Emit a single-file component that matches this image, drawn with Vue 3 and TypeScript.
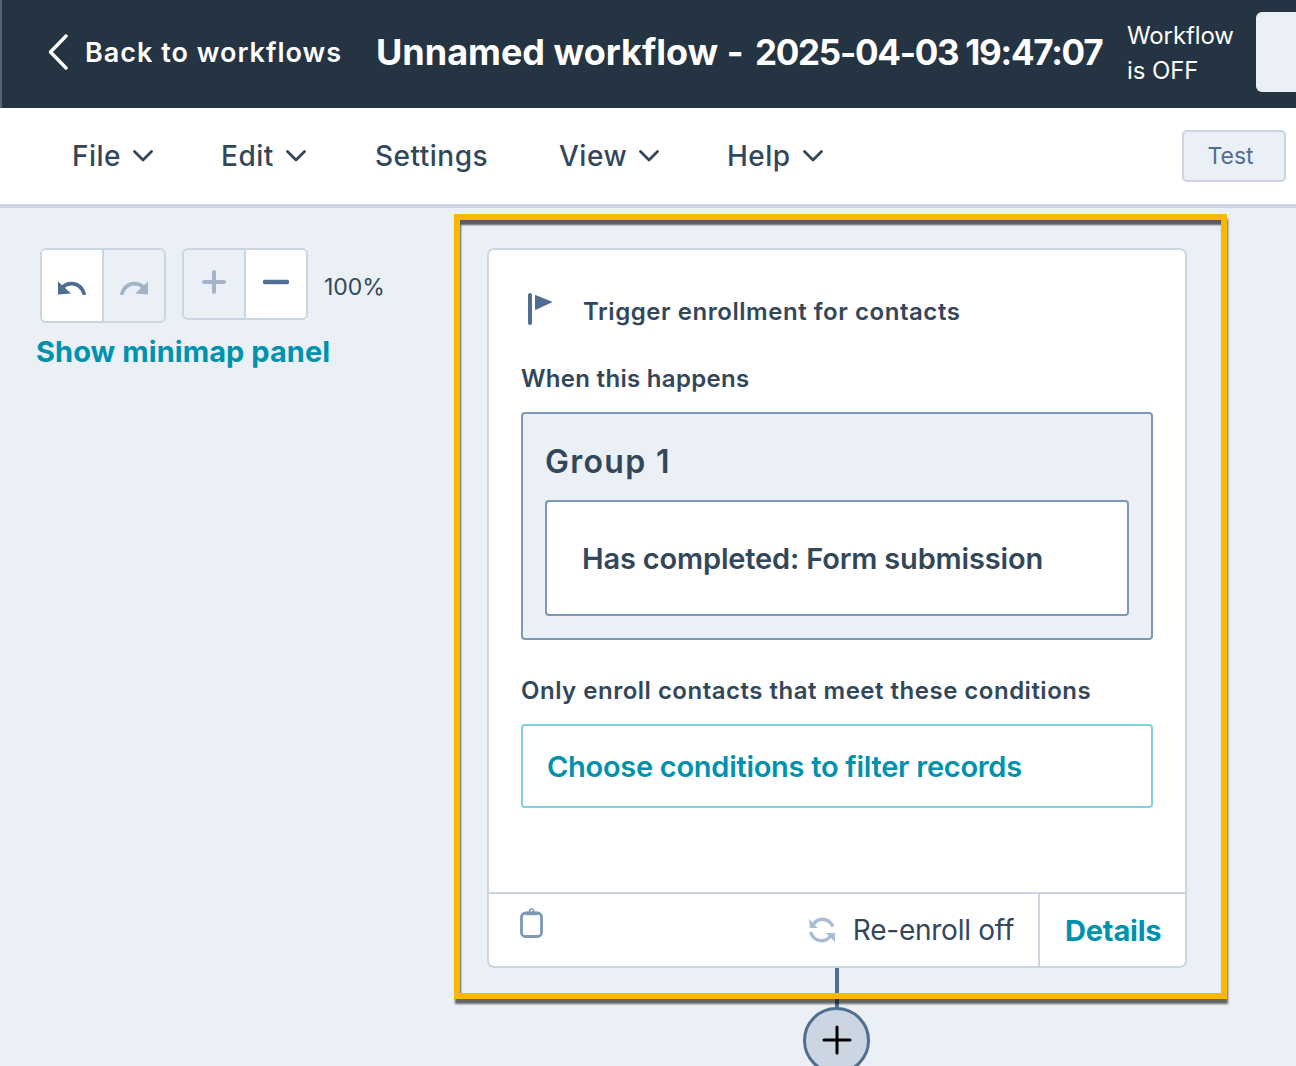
<script setup lang="ts">
const menu: { label: string; chevron: boolean; cls: string }[] = [
  { label: 'File', chevron: true, cls: 'm-file' },
  { label: 'Edit', chevron: true, cls: 'm-edit' },
  { label: 'Settings', chevron: false, cls: 'm-settings' },
  { label: 'View', chevron: true, cls: 'm-view' },
  { label: 'Help', chevron: true, cls: 'm-help' },
]
</script>

<template>
  <div class="app">
    <header class="top">
      <svg class="back-icon" width="24" height="36" viewBox="0 0 24 36" fill="none">
        <path d="M20 2 4.500 18 20 34" stroke="#fff" stroke-width="3.400" stroke-linecap="round" stroke-linejoin="round" />
      </svg>
      <span class="back-text">Back to workflows</span>
      <h1 class="title">Unnamed workflow - <span class="stamp">2025-04-03 19:47:07</span></h1>
      <div class="status">Workflow<br />is OFF</div>
      <div class="toggle"></div>
    </header>

    <nav class="menubar">
      <div v-for="m in menu" :key="m.label" class="menu-item" :class="m.cls">
        <span>{{ m.label }}</span>
        <svg v-if="m.chevron" width="20" height="12" viewBox="0 0 20 12" fill="none">
          <path d="M1.500 1.500 10 10l8.500-8.500" stroke="#33475b" stroke-width="2.800" stroke-linecap="round" stroke-linejoin="round" />
        </svg>
      </div>
      <button class="test">Test</button>
    </nav>

    <main class="canvas">
      <aside class="tools">
        <div class="tool-row">
          <div class="tool-group tall">
            <div class="tool on">
              <svg class="hist-icon" width="28" height="14" viewBox="0 0 28 14" fill="none">
                <path d="M4 6.500C11 .5 22 1 26 12.500" stroke="#506e91" stroke-width="3.800" stroke-linecap="round" />
                <path d="M0 0.500V13.500L13 12.500z" fill="#506e91" />
              </svg>
            </div>
            <div class="tool">
              <svg class="hist-icon" width="28" height="14" viewBox="0 0 28 14" fill="none">
                <path d="M24 6.500C17 .5 6 1 2 12.500" stroke="#a3b4c9" stroke-width="3.800" stroke-linecap="round" />
                <path d="M28 0.500V13.500L15 12.500z" fill="#a3b4c9" />
              </svg>
            </div>
          </div>
          <div class="tool-group">
            <div class="tool">
              <svg class="zoom-icon" width="24" height="24" viewBox="0 0 24 24" fill="none">
                <path d="M12 2v20M2 12h20" stroke="#a3b4c9" stroke-width="4" stroke-linecap="round" />
              </svg>
            </div>
            <div class="tool on">
              <svg class="zoom-icon" width="26" height="24" viewBox="0 0 26 24" fill="none">
                <path d="M2 12h22" stroke="#506e91" stroke-width="4.400" stroke-linecap="round" />
              </svg>
            </div>
          </div>
          <span class="pct">100%</span>
        </div>
        <a class="minimap">Show minimap panel</a>
      </aside>

      <section class="highlight">
        <article class="card">
          <div class="card-body">
            <div class="trigger">
              <svg width="26" height="34" viewBox="0 0 26 34">
                <rect x="1" y="1" width="4" height="32" rx="2" fill="#506e91" />
                <path d="M8.500 3.500 24.500 10 8.500 17.500z" fill="#506e91" stroke="#506e91" stroke-width="1" stroke-linejoin="round" />
              </svg>
              <span>Trigger enrollment for contacts</span>
            </div>
            <div class="label when">When this happens</div>
            <div class="group">
              <div class="group-title">Group 1</div>
              <div class="group-item">Has completed: Form submission</div>
            </div>
            <div class="label only">Only enroll contacts that meet these conditions</div>
            <div class="choose">Choose conditions to filter records</div>
          </div>
          <footer class="card-foot">
            <svg class="clip" width="24" height="30" viewBox="0 0 24 30" fill="none">
              <rect x="1.500" y="5" width="20" height="23.500" rx="4" stroke="#7c98b6" stroke-width="2.800" />
              <circle cx="11.500" cy="3" r="2" stroke="#7c98b6" stroke-width="1.500" />
              <rect x="5" y="3.800" width="13" height="3.500" rx="1.500" fill="#7c98b6" />
            </svg>
            <div class="reenroll">
              <svg width="26" height="26" viewBox="0 0 26 26" fill="none">
                <path d="M4 8C8 .5 19 -.5 24 9.500" stroke="#a9bbd0" stroke-width="3.400" />
                <path d="M1.500 15C5 25.500 17 26.500 22 18" stroke="#a9bbd0" stroke-width="3.400" />
                <path d="M0 2 1 11H8.500z" fill="#a9bbd0" />
                <path d="M17 16H26V25z" fill="#a9bbd0" />
              </svg>
              <span>Re-enroll off</span>
            </div>
            <div class="details">Details</div>
          </footer>
        </article>
      </section>

      <div class="connector"></div>
      <div class="add">
        <svg class="plus" width="30" height="30" viewBox="0 0 30 30" fill="none">
          <path d="M15 2v26M2 15h26" stroke="#000" stroke-width="3" stroke-linecap="round" />
        </svg>
      </div>
    </main>
  </div>
</template>

<style>
html,
body {
  margin: 0;
  background: #eaf0f6;
}
</style>

<style scoped>
.app {
  width: 1296px;
  height: 1066px;
  overflow: hidden;
  display: flex;
  flex-direction: column;
  font-family: Inter, "Noto Sans", sans-serif;
  color: #33475b;
  background: #eaf0f6;
}

.top {
  height: 108px;
  flex: none;
  box-sizing: border-box;
  border-left: 2px solid #566371;
  padding-bottom: 4px;
  background: #253443;
  color: #fff;
  display: flex;
  align-items: center;
  overflow: hidden;
  white-space: nowrap;
}
.back-icon {
  margin-left: 44px;
  margin-right: 15px;
  flex: none;
}
.back-text {
  width: 291px;
  flex: none;
  font-size: 27px;
  font-weight: 600;
  letter-spacing: 1px;
}
.title {
  width: 731px;
  flex: none;
  margin: 0;
  font-size: 36px;
  font-weight: 700;
  letter-spacing: 0;
}
.stamp {
  margin-left: 3px;
  font-size: 35px;
  letter-spacing: -1.300px;
}
.status {
  margin: 2px 0 0 20px;
  width: 129px;
  flex: none;
  font-size: 24px;
  line-height: 35px;
  font-weight: 400;
  letter-spacing: -0.100px;
}
.toggle {
  flex: none;
  width: 60px;
  height: 80px;
  border-radius: 6px;
  background: #eaf0f6;
}

.menubar {
  height: 100px;
  flex: none;
  box-sizing: border-box;
  border-bottom: 4px solid #cbd6e2;
  background: #fff;
  display: flex;
  align-items: center;
  padding-left: 72px;
  white-space: nowrap;
}
.menu-item {
  display: flex;
  align-items: center;
  gap: 12px;
  font-size: 28px;
  font-weight: 500;
  letter-spacing: 0.500px;
  color: #33475b;
}
.m-file { width: 149px; }
.m-edit { width: 154px; }
.m-settings { width: 184px; }
.m-view { width: 168px; }
.m-help { width: 455px; }
.test {
  width: 104px;
  height: 52px;
  box-sizing: border-box;
  margin: 0;
  padding: 0 7px 0 0;
  border: 2px solid #cbd6e2;
  border-radius: 5px;
  background: #eaf0f6;
  color: #506e91;
  font-family: inherit;
  font-size: 23px;
  font-weight: 400;
}

.canvas {
  position: relative;
  flex: 1;
  display: flex;
  align-items: flex-start;
  padding-top: 6px;
  overflow: hidden;
}
.tools {
  width: 454px;
  flex: none;
  box-sizing: border-box;
  padding: 34px 0 0 40px;
  white-space: nowrap;
}
.tool-row {
  display: flex;
  align-items: flex-start;
  gap: 16px;
}
.tool-group {
  width: 126px;
  height: 72px;
  box-sizing: border-box;
  display: flex;
  border: 2px solid #cbd6e2;
  border-radius: 6px;
  overflow: hidden;
  background: #eaf0f6;
}
.tool-group.tall {
  height: 75px;
}
.tool {
  flex: 1;
  display: flex;
  align-items: center;
  justify-content: center;
}
.tool + .tool {
  border-left: 2px solid #cbd6e2;
}
.tool.on {
  background: #fff;
}
.hist-icon {
  margin-top: 4px;
}
.zoom-icon {
  margin-bottom: 4px;
}
.pct {
  align-self: flex-start;
  line-height: 78px;
  font-size: 23px;
  color: #33475b;
}
.minimap {
  display: block;
  margin: 8px 0 0 -4px;
  font-size: 29px;
  line-height: 36px;
  font-weight: 700;
  letter-spacing: 0.050px;
  color: #0091ae;
}

.highlight {
  position: relative;
  z-index: 2;
  width: 773px;
  height: 785px;
  flex: none;
  box-sizing: border-box;
  border: 6px solid #fdb700;
  padding: 28px 0 0 27px;
  box-shadow: 1px 5px 2px rgba(0, 0, 0, 0.58), inset 1px 5px 2px rgba(0, 0, 0, 0.62);
}
.card {
  width: 700px;
  height: 720px;
  box-sizing: border-box;
  border: 2px solid #cbd6e2;
  border-radius: 7px;
  background: #fff;
  display: flex;
  flex-direction: column;
  white-space: nowrap;
}
.card-body {
  flex: 1;
  padding: 0 32px;
}
.trigger {
  display: flex;
  align-items: center;
  gap: 30px;
  margin: 43px 0 0 6px;
  height: 36px;
  font-size: 24px;
  font-weight: 600;
  letter-spacing: 0.550px;
}
.trigger svg {
  margin-top: -4px;
}
.label {
  font-size: 24px;
  line-height: 30px;
  font-weight: 600;
}
.when {
  margin-top: 35px;
  letter-spacing: 0.300px;
}
.group {
  margin-top: 18px;
  width: 632px;
  height: 228px;
  box-sizing: border-box;
  border: 2px solid #7c98b6;
  border-radius: 4px;
  background: #eaf0f6;
  padding: 0 22px;
}
.group-title {
  margin-top: 27px;
  font-size: 32px;
  line-height: 42px;
  font-weight: 600;
  letter-spacing: 1.300px;
}
.group-item {
  margin-top: 17px;
  height: 116px;
  box-sizing: border-box;
  border: 2px solid #7c98b6;
  border-radius: 4px;
  background: #fff;
  padding-left: 35px;
  display: flex;
  align-items: center;
  font-size: 29px;
  font-weight: 600;
  letter-spacing: -0.170px;
}
.only {
  margin-top: 36px;
  letter-spacing: 0.500px;
}
.choose {
  margin-top: 18px;
  width: 632px;
  height: 84px;
  box-sizing: border-box;
  border: 2px solid #7fd1de;
  border-radius: 4px;
  padding-left: 24px;
  display: flex;
  align-items: center;
  font-size: 29px;
  font-weight: 600;
  letter-spacing: -0.280px;
  color: #0091ae;
}
.card-foot {
  height: 74px;
  flex: none;
  box-sizing: border-box;
  border-top: 2px solid #cbd6e2;
  display: flex;
  align-items: stretch;
}
.clip {
  margin: 14px 0 0 31px;
  flex: none;
}
.reenroll {
  margin-left: auto;
  display: flex;
  align-items: center;
  gap: 18px;
  padding-right: 24px;
  font-size: 28px;
  font-weight: 400;
  letter-spacing: -0.250px;
}
.details {
  width: 147px;
  flex: none;
  box-sizing: border-box;
  border-left: 2px solid #cbd6e2;
  padding-left: 25px;
  display: flex;
  align-items: center;
  font-size: 29px;
  font-weight: 700;
  letter-spacing: -0.200px;
  color: #0091ae;
}

.connector {
  position: absolute;
  left: 835px;
  top: 760px;
  width: 4px;
  height: 40px;
  background: #506e91;
}
.add {
  position: absolute;
  left: 803px;
  top: 799px;
  width: 67px;
  height: 67px;
  box-sizing: border-box;
  border: 3px solid #506e91;
  border-radius: 50%;
  background: #cbd6e2;
  display: flex;
  align-items: center;
  justify-content: center;
}
.plus {
  margin-top: -1px;
}
</style>
